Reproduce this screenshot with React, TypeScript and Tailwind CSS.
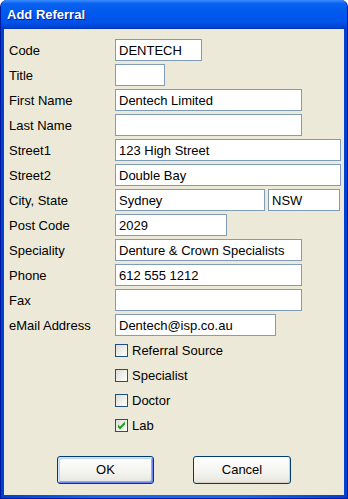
import React from 'react'

type Field = { label: string; value: string; width: string }

const fields: Field[] = [
  { label: 'Code', value: 'DENTECH', width: 'w-[87px]' },
  { label: 'Title', value: '', width: 'w-[50px]' },
  { label: 'First Name', value: 'Dentech Limited', width: 'w-[187px]' },
  { label: 'Last Name', value: '', width: 'w-[187px]' },
  { label: 'Street1', value: '123 High Street', width: 'w-[226px]' },
  { label: 'Street2', value: 'Double Bay', width: 'w-[226px]' },
]

const fields2: Field[] = [
  { label: 'Post Code', value: '2029', width: 'w-[112px]' },
  { label: 'Speciality', value: 'Denture & Crown Specialists', width: 'w-[187px]' },
  { label: 'Phone', value: '612 555 1212', width: 'w-[187px]' },
  { label: 'Fax', value: '', width: 'w-[187px]' },
  { label: 'eMail Address', value: 'Dentech@isp.co.au', width: 'w-[161px]' },
]

const checks = [
  { label: 'Referral Source', checked: false },
  { label: 'Specialist', checked: false },
  { label: 'Doctor', checked: false },
  { label: 'Lab', checked: true },
]

function TextBox({ value, width }: { value: string; width: string }) {
  return (
    <div className={`${width} h-[22px] border border-[#7F9DB9] bg-white px-[3px] pt-[1px] flex items-center text-[13px] text-black whitespace-nowrap overflow-hidden`}>
      {value}
    </div>
  )
}

function Row({ label, children }: { label: string; children: React.ReactNode }) {
  return (
    <div className="flex items-center h-[22px]">
      <div className="w-[106px] pt-[1px] text-[13px] text-black">{label}</div>
      {children}
    </div>
  )
}

function CheckBox({ checked }: { checked: boolean }) {
  return (
    <div className="w-[13px] h-[13px] border border-[#1C5180] bg-[linear-gradient(135deg,#DCDCD7_0%,#F4F4F1_70%,#FFFFFF_100%)] flex items-center justify-center">
      {checked && (
        <svg width="11" height="11" viewBox="0 0 11 11">
          <path d="M2 4.5 L4 6.5 L9 1.5 L9 4.5 L4 9.5 L2 7.5 Z" fill="#21A121" />
        </svg>
      )}
    </div>
  )
}

export default function App() {
  return (
    <div className="w-[348px] h-[499px] bg-white font-['Liberation_Sans',Arial,sans-serif]">
      <div className="w-full h-full flex flex-col rounded-t-[7px] bg-[#0855E8] overflow-hidden border-x border-b border-[#0019A0]">
        {/* title bar */}
        <div className="h-[29px] shrink-0 flex items-center pl-[6px] bg-[linear-gradient(180deg,#3D8EFF_0%,#0A62F0_12%,#0058EE_45%,#0053EA_75%,#0046D6_92%,#0035B8_100%)]">
          <span className="text-white font-bold text-[13px] [text-shadow:1px_1px_0_#0A1E8A]">Add Referral</span>
        </div>
        <div className="flex-1 flex px-[3px] pb-[3px] bg-[linear-gradient(90deg,#0040D0,#166AEE_30%,#166AEE_70%,#0040D0)]">
          <div className="flex-1 bg-[#ECE9D8] flex flex-col pl-[5px] pt-[10px]">
            <div className="flex flex-col gap-[3px]">
              {fields.map((f) => (
                <Row key={f.label} label={f.label}>
                  <TextBox value={f.value} width={f.width} />
                </Row>
              ))}
              <Row label="City, State">
                <div className="flex gap-[3px]">
                  <TextBox value="Sydney" width="w-[150px]" />
                  <TextBox value="NSW" width="w-[72px]" />
                </div>
              </Row>
              {fields2.map((f) => (
                <Row key={f.label} label={f.label}>
                  <TextBox value={f.value} width={f.width} />
                </Row>
              ))}
              {checks.map((c) => (
                <div key={c.label} className="flex items-center h-[22px] pl-[106px] gap-[4px]">
                  <CheckBox checked={c.checked} />
                  <span className="text-[13px] pt-[1px] text-black">{c.label}</span>
                </div>
              ))}
            </div>
            <div className="flex mt-[20px] pl-[48px] gap-[39px]">
              <button className="w-[97px] h-[28px] rounded-[3px] border border-[#003C74] bg-[linear-gradient(180deg,#FFFFFF_0%,#F3F3EF_60%,#E6E4DC_100%)] shadow-[inset_1px_1px_0_#CEE7FF,inset_-1px_-1px_0_#6982EE,inset_2px_2px_0_#BCD4F6,inset_-2px_-2px_0_#89ADE4] text-[13px] text-black">
                OK
              </button>
              <button className="w-[98px] h-[28px] rounded-[3px] border border-[#003C74] bg-[linear-gradient(180deg,#FFFFFF_0%,#F3F3EF_60%,#E6E4DC_100%)] shadow-[inset_-1px_-1px_0_#D6D0C5] text-[13px] text-black">
                Cancel
              </button>
            </div>
          </div>
        </div>
      </div>
    </div>
  )
}
